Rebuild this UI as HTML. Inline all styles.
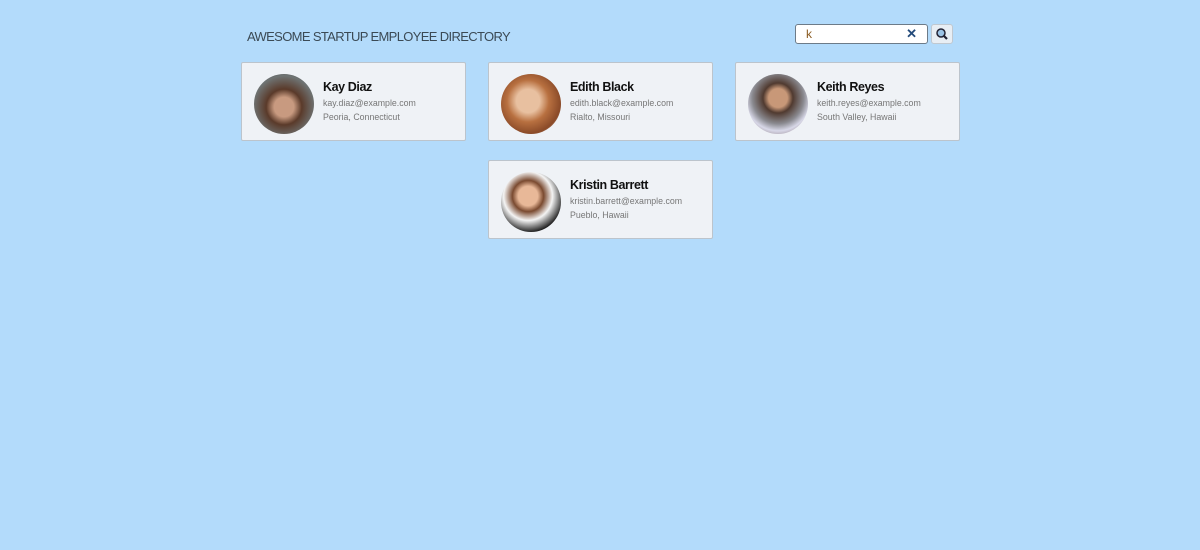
<!DOCTYPE html>
<html><head><style>
body{margin:0;width:1200px;height:550px;background:#b3dbfb;font-family:"Liberation Sans",sans-serif;position:relative;overflow:hidden}
h1{position:absolute;left:247px;top:29px;margin:0;font-size:13px;font-weight:normal;color:#3b4a55;letter-spacing:-0.65px}
.search{position:absolute;left:795px;top:24px;width:131px;height:18px;background:#fff;border:1px solid #6d7b88;border-radius:3px}
.search span{position:absolute;left:10px;top:2px;font-size:12px;color:#8a5a20}
.search b{position:absolute;right:10px;top:1px;font-size:13px;color:#234a7a}
.btn{position:absolute;left:931px;top:24px;width:20px;height:18px;background:#e8eef4;border:1px solid #c0c8d0;border-radius:3px}
.card{position:absolute;width:223px;height:77px;background:#eff2f6;border:1px solid #bcc4cc;border-radius:2px}
.av{position:absolute;left:12px;top:11px;width:60px;height:60px;border-radius:50%}
.n{position:absolute;left:81px;top:17px;font-size:12.5px;font-weight:bold;color:#111;letter-spacing:-0.4px}
.e{position:absolute;left:81px;top:35px;font-size:8.8px;color:#777}
.l{position:absolute;left:81px;top:49px;font-size:8.8px;color:#777}
</style></head><body>
<h1>AWESOME STARTUP EMPLOYEE DIRECTORY</h1>
<div class="search"><span>k</span><b>✕</b></div>
<div class="btn"><svg width="20" height="18" viewBox="0 0 20 18"><circle cx="9" cy="8" r="4" fill="#9cc4e6" stroke="#223" stroke-width="1.5"/><line x1="12" y1="11" x2="15" y2="14" stroke="#223" stroke-width="2.2"/></svg></div>
<div class="card" style="left:241px;top:62px"><div class="av" style="background:radial-gradient(circle at 50% 55%,#c89a80 0 22%,#5a3a2a 40%,#6f7474 70%,#3a3838)"></div><div class="n">Kay Diaz</div><div class="e">kay.diaz@example.com</div><div class="l">Peoria, Connecticut</div></div>
<div class="card" style="left:488px;top:62px"><div class="av" style="background:radial-gradient(circle at 45% 45%,#e8c0a0 0 25%,#b87040 45%,#8a4a28 70%,#f0e0d0)"></div><div class="n">Edith Black</div><div class="e">edith.black@example.com</div><div class="l">Rialto, Missouri</div></div>
<div class="card" style="left:735px;top:62px"><div class="av" style="background:radial-gradient(circle at 50% 40%,#c89878 0 20%,#503a30 32%,#8a8a90 55%,#d8d8e8 70%,#6a5050)"></div><div class="n">Keith Reyes</div><div class="e">keith.reyes@example.com</div><div class="l">South Valley, Hawaii</div></div>
<div class="card" style="left:488px;top:160px"><div class="av" style="background:radial-gradient(circle at 45% 40%,#e8b898 0 20%,#7a4a30 32%,#f4f4f4 50%,#1a1a1a 75%)"></div><div class="n">Kristin Barrett</div><div class="e">kristin.barrett@example.com</div><div class="l">Pueblo, Hawaii</div></div>
</body></html>
